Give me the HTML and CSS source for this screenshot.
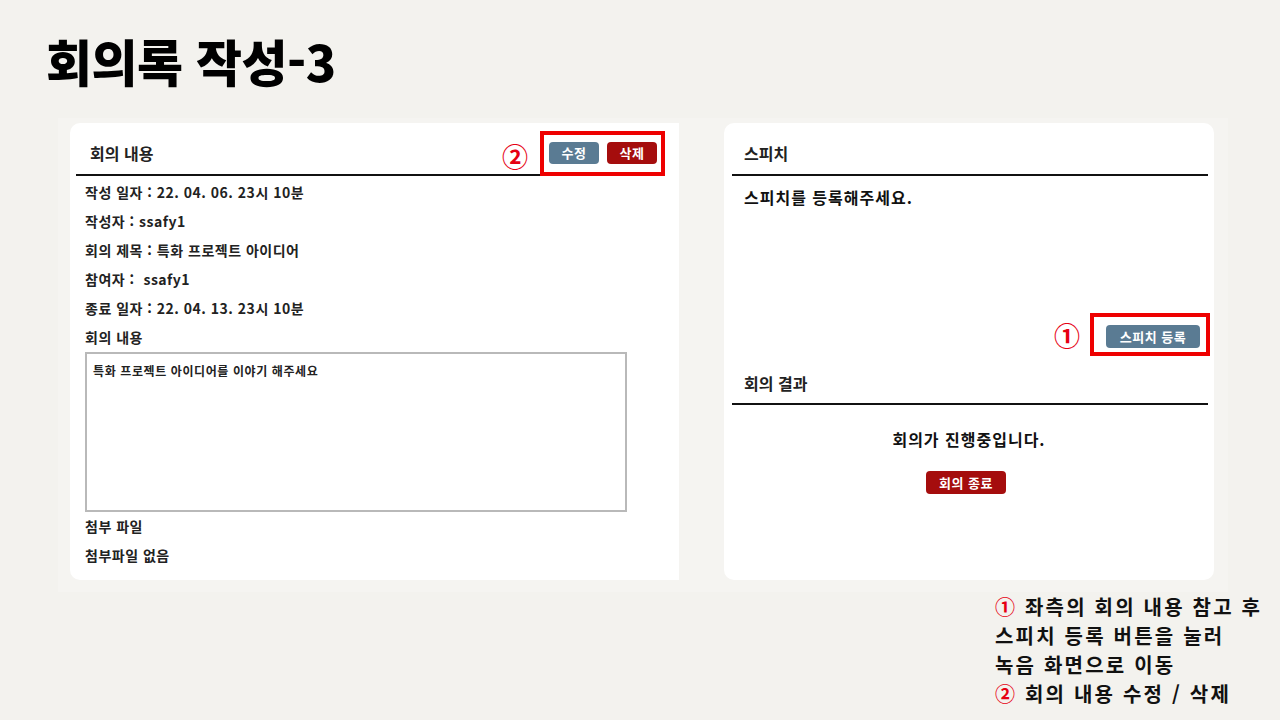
FILE: index.html
```html
<!DOCTYPE html>
<html lang="ko">
<head>
<meta charset="utf-8">
<title>회의록 작성-3</title>
<link rel="stylesheet" href="styles.css">
</head>
<body>
<main class="slide">
  <h1 class="title">회의록 작성-3</h1>

  <div class="board">
    <section class="card card-left">
      <header class="card-head">
        <h2>회의 내용</h2>
        <div class="annot">
          <span class="num">②</span>
          <div class="redbox redbox-top">
            <button class="btn btn-blue">수정</button>
            <button class="btn btn-red">삭제</button>
          </div>
        </div>
      </header>
      <div class="info">
        <p>작성 일자 : 22. 04. 06. 23시 10분</p>
        <p>작성자 : ssafy1</p>
        <p>회의 제목 : 특화 프로젝트 아이디어</p>
        <p>참여자 :&nbsp; ssafy1</p>
        <p>종료 일자 : 22. 04. 13. 23시 10분</p>
        <p>회의 내용</p>
        <div class="memo">특화 프로젝트 아이디어를 이야기 해주세요</div>
        <p>첨부 파일</p>
        <p>첨부파일 없음</p>
      </div>
    </section>

    <section class="card card-right">
      <header class="card-head">
        <h2>스피치</h2>
      </header>
      <div class="speech">
        <p class="speech-text">스피치를 등록해주세요.</p>
        <div class="speech-actions">
          <span class="num">①</span>
          <div class="redbox redbox-side">
            <button class="btn btn-blue btn-wide">스피치 등록</button>
          </div>
        </div>
      </div>
      <header class="card-head card-head-2">
        <h2>회의 결과</h2>
      </header>
      <div class="result">
        <p>회의가 진행중입니다.</p>
        <button class="btn btn-red btn-end">회의 종료</button>
      </div>
    </section>
  </div>

  <div class="note">
    <p><span class="red">①</span> 좌측의 회의 내용 참고 후</p>
    <p>스피치 등록 버튼을 눌러</p>
    <p>녹음 화면으로 이동</p>
    <p><span class="red">②</span> 회의 내용 수정 / 삭제</p>
  </div>
</main>
</body>
</html>
```

FILE: styles.css
```css
* { box-sizing: border-box; }

html, body {
  margin: 0;
  padding: 0;
  background: #f3f2ee;
}

body {
  font-family: "Noto Sans CJK KR", "Noto Sans", sans-serif;
  color: #1a1a1a;
  width: 1280px;
  height: 720px;
  overflow: hidden;
}

p { margin: 0; }

.slide {
  padding-top: 30px;
}

.title {
  margin: 0;
  padding-left: 46px;
  font-size: 50px;
  line-height: 60px;
  font-weight: 900;
  letter-spacing: -0.5px;
  color: #000;
}

.board {
  margin: 28px 0 0 58px;
  width: 1170px;
  padding: 5px 0 12px 12px;
  background: #f5f4f1;
  display: flex;
  gap: 45px;
}

.card {
  background: #fff;
  height: 457px;
  display: flex;
  flex-direction: column;
}

.card-left {
  width: 609px;
  border-radius: 10px 0 0 10px;
  padding: 0 14px 0 6px;
}

.card-right {
  width: 490px;
  border-radius: 10px;
  padding: 0 6px 0 8px;
}

.card-head {
  display: flex;
  justify-content: space-between;
  align-items: center;
  height: 53px;
  padding: 8px 0 0 14px;
  border-bottom: 2px solid #111;
}

.card-right .card-head {
  padding-left: 12px;
}

.card-head h2 {
  margin: 0;
  font-size: 16px;
  font-weight: 700;
  color: #222;
}

.card-head-2 {
  height: 47px;
  padding-top: 5px;
}

.annot {
  align-self: flex-end;
  display: flex;
  align-items: center;
  gap: 12px;
}

.num {
  color: #e60012;
  font-size: 26px;
  font-weight: 700;
  line-height: 1;
}

.annot .num {
  margin-top: 6px;
}

.redbox {
  border: 4px solid #ee0000;
  display: flex;
  align-items: center;
  position: relative;
  background: #fff;
}

.redbox-top {
  width: 125px;
  height: 45px;
  margin-bottom: -2px;
  padding: 0 4px 1px 5px;
  gap: 8px;
}

.redbox-side {
  width: 120px;
  height: 43px;
  padding: 4px 6px 0 12px;
}

.btn {
  border: none;
  border-radius: 4px;
  color: #fff;
  font-family: "Noto Sans CJK KR", "Noto Sans", sans-serif;
  font-size: 13px;
  font-weight: 700;
  letter-spacing: 0.5px;
  height: 22px;
  width: 50px;
  padding: 0;
  line-height: 22px;
}

.btn-blue { background: #5a7b93; }
.btn-red { background: #a50d0d; }

.btn-wide {
  width: 94px;
  height: 23px;
}

.btn-end {
  width: 80px;
  height: 23px;
  margin: 20px 8px 0 0;
}

.info {
  padding: 2px 0 0 9px;
}

.info p {
  font-size: 14px;
  line-height: 29px;
  font-weight: 700;
  letter-spacing: 0.5px;
  color: #222;
}

.memo {
  width: 542px;
  height: 160px;
  border: 2px solid #b9b9b9;
  padding: 8px 6px;
  font-size: 12px;
  line-height: 18px;
  font-weight: 700;
  letter-spacing: 0.6px;
  color: #222;
}

.speech {
  height: 182px;
  display: flex;
  flex-direction: column;
  justify-content: space-between;
  padding: 9px 0 2px 12px;
}

.speech-text {
  font-size: 16px;
  line-height: 24px;
  letter-spacing: 1px;
  font-weight: 700;
  color: #111;
}

.speech-actions {
  display: flex;
  justify-content: flex-end;
  align-items: center;
  gap: 10px;
  margin-right: -2px;
}

.result {
  display: flex;
  flex-direction: column;
  align-items: center;
}

.result p {
  margin: 22px 2px 0 0;
  font-size: 16px;
  line-height: 24px;
  font-weight: 700;
  letter-spacing: 1px;
  color: #111;
}

.note {
  margin: 0 0 0 995px;
  white-space: nowrap;
}

.note p {
  font-size: 20px;
  line-height: 29px;
  font-weight: 700;
  letter-spacing: 2.2px;
  color: #111;
}

.red {
  color: #e60012;
}
```
